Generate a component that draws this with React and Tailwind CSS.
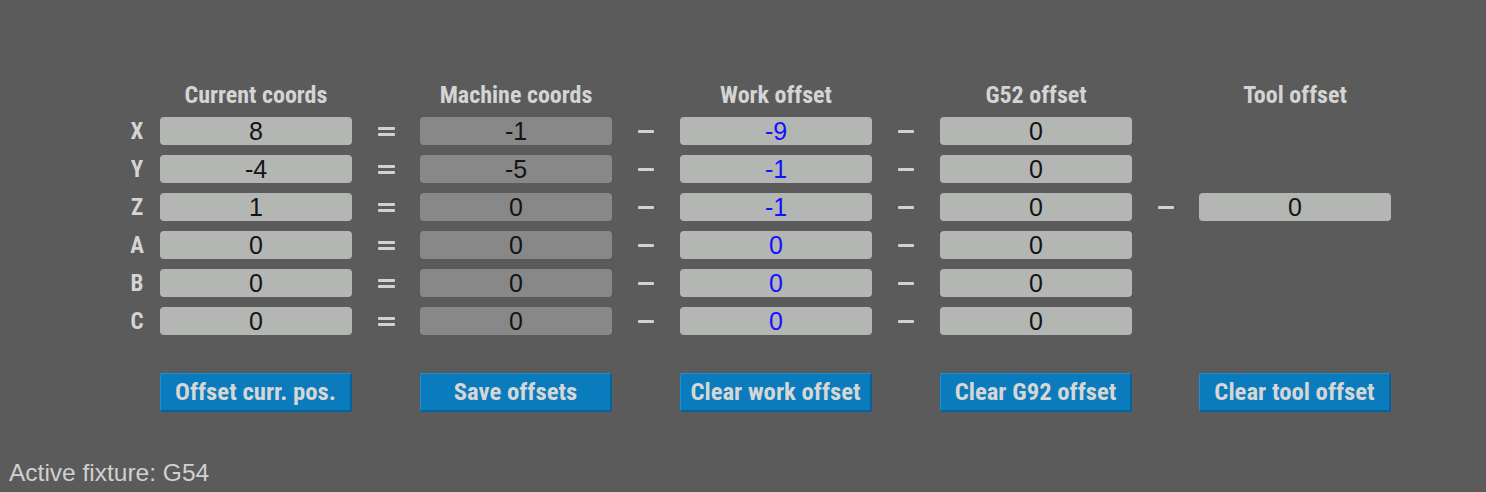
const headers = ['Current coords', 'Machine coords', 'Work offset', 'G52 offset', 'Tool offset']

const rows = [
  { axis: 'X', cur: '8', mach: '-1', work: '-9', g52: '0' },
  { axis: 'Y', cur: '-4', mach: '-5', work: '-1', g52: '0' },
  { axis: 'Z', cur: '1', mach: '0', work: '-1', g52: '0', tool: '0' },
  { axis: 'A', cur: '0', mach: '0', work: '0', g52: '0' },
  { axis: 'B', cur: '0', mach: '0', work: '0', g52: '0' },
  { axis: 'C', cur: '0', mach: '0', work: '0', g52: '0' },
]

const buttons = ['Offset curr. pos.', 'Save offsets', 'Clear work offset', 'Clear G92 offset', 'Clear tool offset']

const cond = { fontFamily: "'Roboto Condensed', 'Liberation Sans Narrow', 'DejaVu Sans Condensed', sans-serif" }
const sans = { fontFamily: "'Liberation Sans', Arial, sans-serif" }

function Field({ value, dark, blue }) {
  return (
    <div
      style={sans}
      className={`h-[28px] rounded-[4px] flex items-center justify-center text-[25px] leading-none ${
        dark ? 'bg-[#878887]' : 'bg-[#b4b6b4]'
      } ${blue ? 'text-[#1212ff]' : 'text-[#141414]'}`}
    >
      {value}
    </div>
  )
}

function Eq() {
  return (
    <div className="flex flex-col items-center justify-center gap-[3px] h-[28px]">
      <div className="w-[17px] h-[3px] rounded-[1px] bg-[#d2d2d2]" />
      <div className="w-[17px] h-[3px] rounded-[1px] bg-[#d2d2d2]" />
    </div>
  )
}

function Minus() {
  return (
    <div className="flex items-center justify-center h-[28px]">
      <div className="w-[16px] h-[3px] rounded-[1px] bg-[#d2d2d2] mt-[1px]" />
    </div>
  )
}

export default function App() {
  return (
    <div className="w-[1486px] h-[492px] bg-[#5b5b5b] flex flex-col overflow-hidden">
      <div className="pl-[123px] pt-[83px] grid grid-cols-[37px_192px_68px_192px_68px_192px_68px_192px_67px_192px] gap-y-[10px]">
        <div />
        {headers.map((h, i) => (
          <>
            {i > 0 && <div key={'s' + i} />}
            <div
              key={h}
              style={cond}
              className="h-[24px] flex items-center justify-center text-[24px] font-bold text-[#d4d4d4] leading-none"
            >
              {h}
            </div>
          </>
        ))}

        {rows.map((r) => (
          <>
            <div
              key={r.axis}
              style={cond}
              className="pr-[9px] h-[28px] flex items-center justify-center text-[23px] font-bold text-[#d4d4d4] leading-none"
            >
              {r.axis}
            </div>
            <Field value={r.cur} />
            <Eq />
            <Field value={r.mach} dark />
            <Minus />
            <Field value={r.work} blue />
            <Minus />
            <Field value={r.g52} />
            {r.tool ? <Minus /> : <div />}
            {r.tool ? <Field value={r.tool} /> : <div />}
          </>
        ))}

        <div className="mt-[28px]" />
        {buttons.map((b, i) => (
          <>
            {i > 0 && <div key={'bs' + i} />}
            <button
              key={b}
              style={cond}
              className="mt-[28px] h-[39px] rounded-[2px] bg-[#0a7bbd] border-t border-l border-[#1d8ed2] border-r-2 border-b-2 border-r-[#05639a] border-b-[#05639a] text-[#d6d6d6] text-[24.7px] font-bold leading-none flex items-center justify-center"
            >
              {b}
            </button>
          </>
        ))}
      </div>

      <div style={sans} className="mt-[49px] pl-[9px] text-[24.5px] leading-[24px] text-[#d0d0d0]">
        Active fixture: G54
      </div>
    </div>
  )
}
